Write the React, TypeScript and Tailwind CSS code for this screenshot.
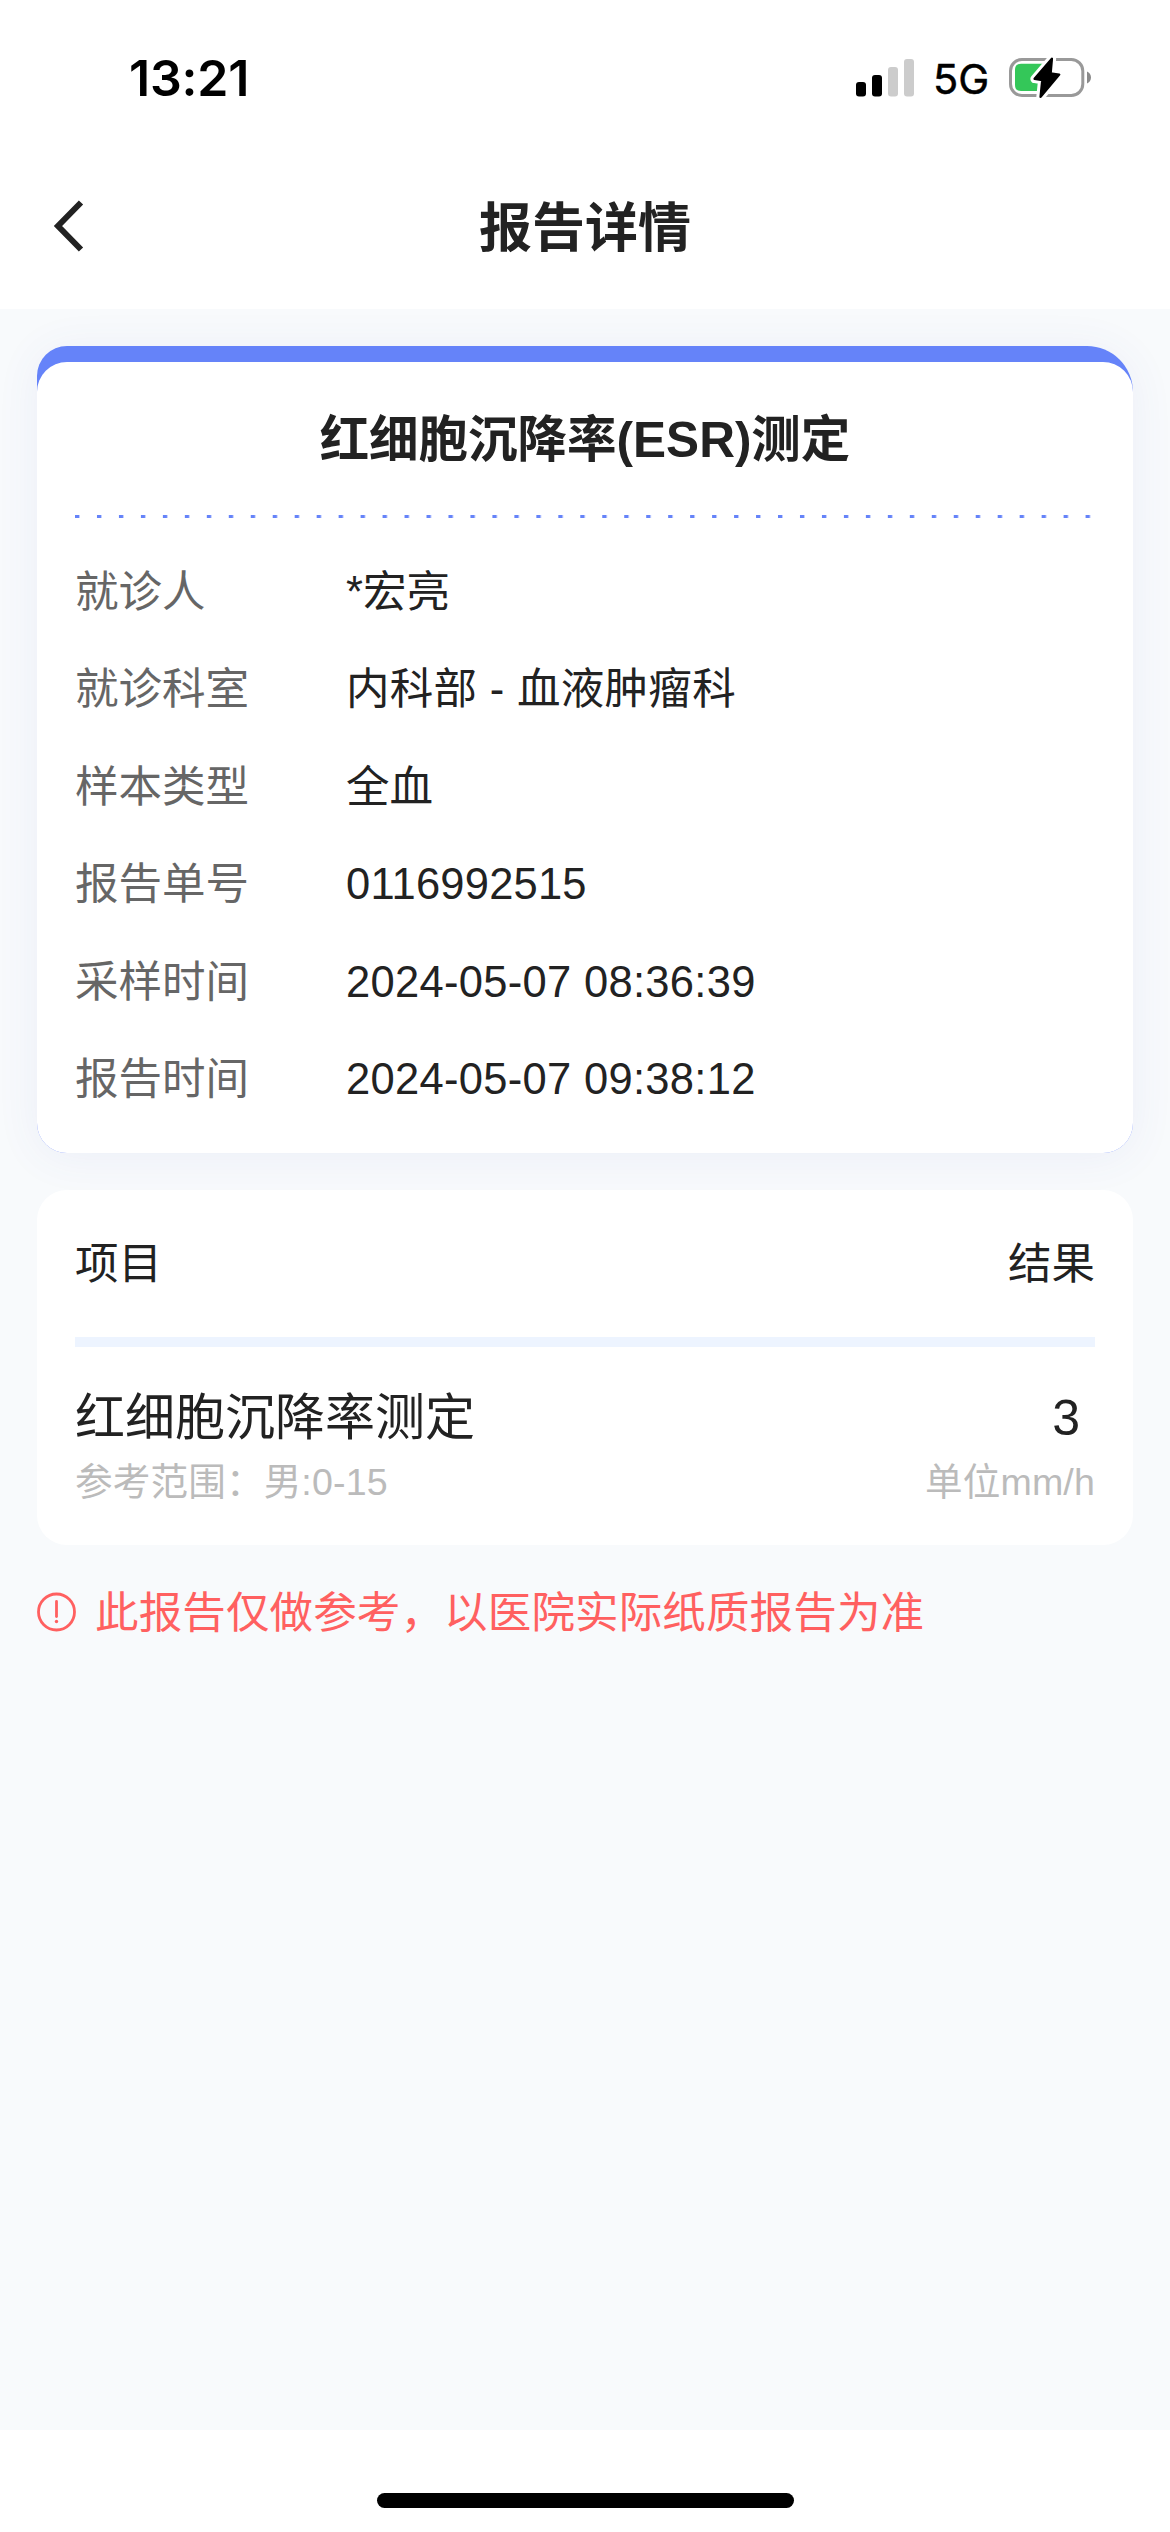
const details = [
  { label: '就诊人', value: '*宏亮', spacing: 'tracking-normal' },
  { label: '就诊科室', value: '内科部 - 血液肿瘤科', spacing: 'tracking-[0.3px]' },
  { label: '样本类型', value: '全血', spacing: 'tracking-normal' },
  { label: '报告单号', value: '0116992515', spacing: 'tracking-[0.2px]' },
  { label: '采样时间', value: '2024-05-07 08:36:39', spacing: 'tracking-[0.3px]' },
  { label: '报告时间', value: '2024-05-07 09:38:12', spacing: 'tracking-[0.3px]' },
];

const bolt = '43.9,2.7 26.6,22.9 34.3,24 32.6,40.8 51.2,18.6 42.6,17.4';

function StatusBar() {
  return (
    <div className="flex h-[156px] items-center justify-between pl-[129px] pr-[78px] font-['Inter',sans-serif] text-black">
      <span className="text-[50px] leading-[60px] font-semibold tracking-[-0.2px]">13:21</span>
      <div className="flex items-center">
        <svg width="58" height="38" viewBox="0 0 58 38" aria-hidden="true">
          <rect x="0" y="23" width="10" height="14.5" rx="3" />
          <rect x="16" y="16" width="10" height="21.5" rx="3" />
          <rect x="32" y="8" width="10" height="29.5" rx="3" fill="#cccccc" />
          <rect x="48" y="0" width="10" height="37.5" rx="3" fill="#cccccc" />
        </svg>
        <span className="ml-[19px] mt-[2px] w-[56px] text-[41.500px] leading-[48px] font-normal [-webkit-text-stroke:0.5px_black]">5G</span>
        <svg className="ml-[19px]" width="84" height="44" viewBox="0 0 84 44" aria-hidden="true">
          <rect x="2.5" y="3.5" width="72.300" height="36" rx="11.5" fill="none" stroke="#999999" strokeWidth="3" />
          <path d="M79 15.500c2.300.8 4 3.200 4 6s-1.700 5.200-4 6z" fill="#8a8a8a" />
          <path d="M13 7.700h24v27.300H13q-6 0-6-6V13.700q0-6 6-6z" fill="#34c759" />
          <polygon points={bolt} fill="#ffffff" stroke="#ffffff" strokeWidth="8.500" strokeLinejoin="round" />
          <polygon points={bolt} fill="#000000" stroke="#000000" strokeWidth="2.400" strokeLinejoin="round" />
        </svg>
      </div>
    </div>
  );
}

function NavBar() {
  return (
    <header className="grid h-[153px] grid-cols-[1fr_auto_1fr] items-center pb-[11px]">
      <svg className="-mt-[2px] ml-[51px]" width="34" height="56" viewBox="0 0 34 56" fill="none" aria-hidden="true">
        <path d="M30 4.500L7 28L30 51.500" stroke="#222222" strokeWidth="6" />
      </svg>
      <h1 className="pt-[3px] text-[53px] leading-[74px] font-bold text-[#222222]">报告详情</h1>
      <span />
    </header>
  );
}

function ReportCard() {
  return (
    <section className="h-[807px] rounded-[30px] rounded-tr-[46px] bg-[#6583f9] pt-4 shadow-[0_4px_45px_rgba(70,90,180,0.07)]">
      <div className="h-[791px] rounded-[30px] bg-white px-[38px]">
        <h2 className="flex h-[153px] items-center justify-center pt-[3px] text-[49.500px] font-bold text-[#222222]">
          红细胞沉降率(ESR)测定
        </h2>
        <div className="h-[3px] bg-[linear-gradient(90deg,#6583f9_4px,#c1cdfd_4px,#c1cdfd_5px,transparent_5px)] bg-[length:21.980px_3px]" />
        <dl className="pt-[26px] text-[43.500px]">
          {details.map((d) => (
            <div key={d.label} className="flex h-[97.400px] items-center">
              <dt className="w-[271px] text-[#666666]">{d.label}</dt>
              <dd className={`text-[#222222] ${d.spacing}`}>{d.value}</dd>
            </div>
          ))}
        </dl>
      </div>
    </section>
  );
}

function ResultCard() {
  return (
    <section className="mt-[37px] h-[355px] rounded-[30px] bg-white px-[38px] text-[#222222]">
      <div className="flex h-[147px] items-center justify-between pt-[3px] text-[43.500px]">
        <span>项目</span>
        <span>结果</span>
      </div>
      <div className="h-[10px] bg-[#edf4ff]" />
      <div className="mt-[33px] flex h-[76px] items-center justify-between text-[50px]">
        <span>红细胞沉降率测定</span>
        <span className="mr-[15px]">3</span>
      </div>
      <div className="flex h-[52px] items-center justify-between text-[37.600px] tracking-[0.15px] text-[#bbbbbb]">
        <span>参考范围：男:0-15</span>
        <span>单位mm/h</span>
      </div>
    </section>
  );
}

function Notice() {
  return (
    <div className="mt-[35px] flex h-[64px] items-center text-[43.500px] tracking-[0.14px] text-[#ff6060]">
      <svg className="mr-[19px]" width="39" height="40" viewBox="0 0 39 40" fill="none" aria-hidden="true">
        <circle cx="19.500" cy="20" r="18" stroke="#ff6060" strokeWidth="2.800" />
        <path d="M19.500 9.500v15" stroke="#ff6060" strokeWidth="2.800" strokeLinecap="round" />
        <circle cx="19.500" cy="29.500" r="1.700" fill="#ff6060" />
      </svg>
      <span className="pt-[3px]">此报告仅做参考，以医院实际纸质报告为准</span>
    </div>
  );
}

export default function App() {
  return (
    <div
      className="flex h-[2532px] w-[1170px] flex-col overflow-hidden bg-white font-['Liberation_Sans','Noto_Sans_CJK_SC',sans-serif]"
      lang="zh-CN"
    >
      <StatusBar />
      <NavBar />
      <main className="h-[2121px] bg-[#f8fafc] px-[37px] pt-[37px]">
        <ReportCard />
        <ResultCard />
        <Notice />
      </main>
      <footer className="flex h-[102px] justify-center pt-[63px]">
        <div className="h-[15px] w-[417px] rounded-full bg-black" />
      </footer>
    </div>
  );
}
